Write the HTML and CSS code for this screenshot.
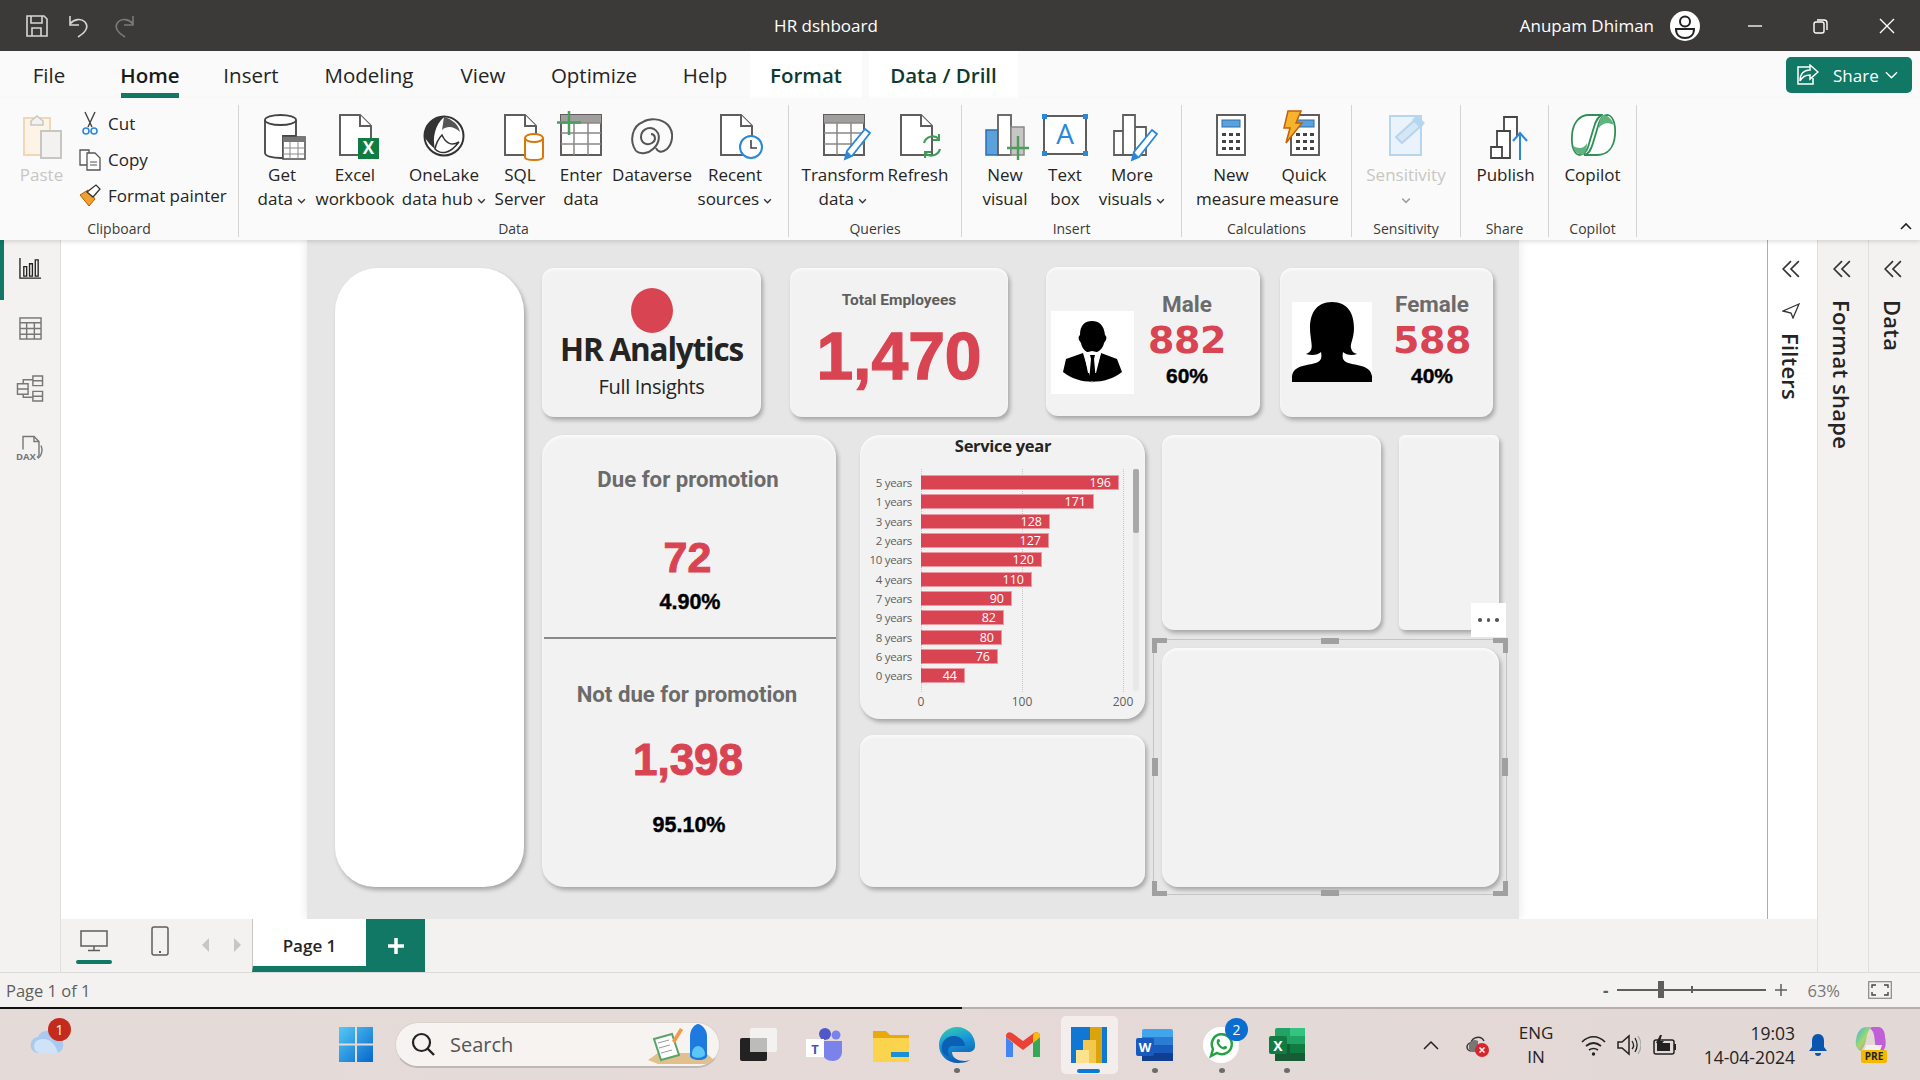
FILE: index.html
```html
<!DOCTYPE html>
<html lang="en">
<head>
<meta charset="utf-8">
<title>HR dshboard</title>
<link rel="stylesheet" href="styles.css">
</head>
<body>
<svg class="defs" aria-hidden="true">
  <defs>
    <g id="doc"><path d="M1 1h20l11 11v29H1z" fill="#fff" stroke="#605e5c" stroke-width="2"/><path d="M21 1v11h11" fill="#fff" stroke="#605e5c" stroke-width="2"/></g>
    <g id="pencil"><path d="M24 0l5 4-18 23-7 3 2-8z" fill="#fff" stroke="#2b88d8" stroke-width="1.8"/><path d="M4 30l2-8 5 5z" fill="#2b88d8"/></g>
    <g id="table"><rect x="1" y="1" width="40" height="40" fill="#fff" stroke="#605e5c" stroke-width="2"/><rect x="1" y="1" width="40" height="8" fill="#a19f9d"/><path d="M1 9h40M1 19h40M1 30h40M14 9v32M28 9v32" stroke="#8a8886" stroke-width="1.5"/></g>
    <g id="calc"><rect x="1" y="1" width="28" height="40" fill="#fff" stroke="#605e5c" stroke-width="2"/><rect x="6" y="6" width="18" height="7" fill="#5ba1dc" stroke="#2b6fb0"/><path d="M6 19h4v3H6zM13 19h4v3h-4zM20 19h4v3h-4zM6 26h4v3H6zM13 26h4v3h-4zM20 26h4v3h-4zM6 33h4v3H6zM13 33h4v3h-4zM20 33h4v3h-4z" fill="#444"/></g>
    <linearGradient id="gWin" x1="0" y1="0" x2="1" y2="1"><stop offset="0" stop-color="#55c9f7"/><stop offset="1" stop-color="#0667c9"/></linearGradient>
    <linearGradient id="gEdge" x1="0" y1="0" x2="0.300" y2="1"><stop offset="0" stop-color="#3ad0a8"/><stop offset=".45" stop-color="#1a9bd8"/><stop offset="1" stop-color="#0b5fb5"/></linearGradient>
    <linearGradient id="gCop" x1="0" y1="0" x2="1" y2="1"><stop offset="0" stop-color="#2fb5e8"/><stop offset=".5" stop-color="#a5d86a"/><stop offset="1" stop-color="#d45cd0"/></linearGradient>
  </defs>
</svg>

<div class="app">
  <header class="titlebar">
    <div class="tb-left">
      <svg class="tb-save" viewBox="0 0 22 22"><path d="M1 1h17l3 3v17H1z" fill="none" stroke="#d6d6d6" stroke-width="1.6"/><path d="M5 1v7h11V1M6 21v-8h9v8" fill="none" stroke="#d6d6d6" stroke-width="1.6"/></svg>
      <svg class="tb-undo" viewBox="0 0 22 24"><path d="M2 2v9h9M2 10c4-5 11-6 15-2 4 5 1 10-7 15" fill="none" stroke="#d6d6d6" stroke-width="1.6"/></svg>
      <svg class="tb-redo" viewBox="0 0 22 24"><path d="M20 2v9h-9M20 10c-4-5-11-6-15-2-4 5-1 10 7 15" fill="none" stroke="#7a7a7a" stroke-width="1.6"/></svg>
    </div>
    <div class="tb-title">HR dshboard</div>
    <div class="tb-right">
      <span class="tb-user">Anupam Dhiman</span>
      <svg class="tb-avatar" viewBox="0 0 30 30"><circle cx="15" cy="15" r="15" fill="#fff"/><circle cx="15" cy="10.5" r="5" fill="none" stroke="#222" stroke-width="2"/><path d="M6 18h18c0 6-4 9-9 9s-9-3-9-9z" fill="none" stroke="#222" stroke-width="2"/></svg>
      <svg class="tb-min" viewBox="0 0 16 16"><path d="M0 8h15" stroke="#fff" stroke-width="1.4"/></svg>
      <svg class="tb-max" viewBox="0 0 16 16"><rect x="1" y="4" width="10" height="11" rx="2" fill="none" stroke="#fff" stroke-width="1.4"/><path d="M4 2h7a3 3 0 0 1 3 3v7" fill="none" stroke="#fff" stroke-width="1.4"/></svg>
      <svg class="tb-close" viewBox="0 0 16 16"><path d="M1 1l14 14M15 1L1 15" stroke="#fff" stroke-width="1.4"/></svg>
    </div>
  </header>

  <nav class="tabs">
    <span class="tab t-file">File</span>
    <span class="tab t-home">Home</span>
    <span class="tab t-insert">Insert</span>
    <span class="tab t-model">Modeling</span>
    <span class="tab t-view">View</span>
    <span class="tab t-opt">Optimize</span>
    <span class="tab t-help">Help</span>
    <span class="tab ctx t-format">Format</span>
    <span class="tab ctx t-drill">Data / Drill</span>
    <button class="share">
      <svg class="share-ico" viewBox="0 0 24 22"><path d="M16 3H3v17h15v-6" fill="none" stroke="#fff" stroke-width="1.5"/><path d="M15 1l8 7-8 7v-4c-5 0-8 2-10 6 0-7 4-11 10-11z" fill="#117865" stroke="#fff" stroke-width="1.5"/></svg>
      <span>Share</span>
      <svg class="share-chev" viewBox="0 0 14 8"><path d="M1 1l6 6 6-6" fill="none" stroke="#fff" stroke-width="1.5"/></svg>
    </button>
  </nav>

  <section class="ribbon">
    <div class="rgroup g-clip">
      <div class="clip-body">
        <div class="item paste">
          <svg class="ico" viewBox="0 0 48 48"><rect x="6" y="5" width="26" height="37" fill="#fdf3e6" stroke="#f0d7b5" stroke-width="2"/><path d="M13 8l6-5 6 5v4H13z" fill="#f3f2f1" stroke="#c8c6c4" stroke-width="1.5"/><rect x="23" y="18" width="20" height="27" fill="#f3f2f1" stroke="#c8c6c4" stroke-width="2"/></svg>
          <span>Paste</span>
        </div>
        <div class="clip-list">
          <div class="clip-row">
            <svg class="cico" viewBox="0 0 24 24"><path d="M7 1l7 15M17 1l-7 15" stroke="#444" stroke-width="1.4" fill="none"/><circle cx="8" cy="20" r="3" fill="none" stroke="#2b88d8" stroke-width="1.6"/><circle cx="16" cy="20" r="3" fill="none" stroke="#2b88d8" stroke-width="1.6"/></svg>
            <span>Cut</span>
          </div>
          <div class="clip-row">
            <svg class="cico" viewBox="0 0 24 24"><path d="M2 3h9l0 15H2z" fill="#fff" stroke="#555" stroke-width="1.3"/><path d="M9 6h8l5 5v12H9z" fill="#fff" stroke="#555" stroke-width="1.3"/><path d="M12 15h7M12 18h7" stroke="#555"/></svg>
            <span>Copy</span>
          </div>
          <div class="clip-row">
            <svg class="cico" viewBox="0 0 24 24"><path d="M2 12l8-5 7 9-6 7z" fill="#f0a030" stroke="#b85c00"/><path d="M9 9l9-7 4 4-7 8z" fill="#fff" stroke="#333" stroke-width="1.3"/></svg>
            <span>Format painter</span>
          </div>
        </div>
      </div>
      <div class="glabel">Clipboard</div>
    </div>

    <div class="rgroup g-data">
      <div class="gitems">
        <div class="item">
          <svg class="ico" viewBox="0 0 48 48"><path d="M7 7v33c0 3 7 5 16 5h2V23h13V7" fill="#fff" stroke="#444" stroke-width="1.8"/><ellipse cx="22.500" cy="7" rx="15.500" ry="5" fill="#fff" stroke="#444" stroke-width="1.800"/><rect x="25" y="24" width="22" height="22" fill="#fff" stroke="#555" stroke-width="1.600"/><rect x="25" y="24" width="22" height="5" fill="#777"/><path d="M25 35h22M25 41h22M32 29v17M40 29v17" stroke="#888"/></svg>
          <span>Get</span><span>data <svg class="chev" viewBox="0 0 8 5"><path d="M1 1l3 3 3-3" fill="none" stroke="#333" stroke-width="1.200"/></svg></span>
        </div>
        <div class="item">
          <svg class="ico" viewBox="0 0 48 48"><use href="#doc" x="8" y="1"/><rect x="27" y="25" width="21" height="21" fill="#107c41"/><text x="37.500" y="41" class="xl-x">X</text></svg>
          <span>Excel</span><span>workbook</span>
        </div>
        <div class="item">
          <svg class="ico" viewBox="0 0 48 48"><circle cx="24" cy="23" r="19.500" fill="#fff" stroke="#333" stroke-width="2"/><path d="M24 4c-12 0-20 10-19 21 3 4 6 8 10 11-3-11 0-24 9-32z" fill="#333"/><path d="M15 36c6 6 15 5 24-7-7 4-13 2-17-7-4 4-6 9-7 14z" fill="#fff" stroke="#333" stroke-width="1.500"/><path d="M24 4c4 1 14 5 16 15-6-5-12-7-18-2" fill="#555"/></svg>
          <span>OneLake</span><span>data hub <svg class="chev" viewBox="0 0 8 5"><path d="M1 1l3 3 3-3" fill="none" stroke="#333" stroke-width="1.200"/></svg></span>
        </div>
        <div class="item">
          <svg class="ico" viewBox="0 0 48 48"><use href="#doc" x="8" y="1"/><path d="M29 25v19c0 2 4 3 9 3s9-1 9-3V25" fill="#fff" stroke="#d97706" stroke-width="2"/><ellipse cx="38" cy="25" rx="9" ry="4" fill="#fff" stroke="#d97706" stroke-width="2"/></svg>
          <span>SQL</span><span>Server</span>
        </div>
        <div class="item">
          <svg class="ico" viewBox="0 0 48 48"><use href="#table" x="3" y="1"/><path d="M12 -2v24M0 9.500h24" stroke="#4a9e5c" stroke-width="2.500"/></svg>
          <span>Enter</span><span>data</span>
        </div>
        <div class="item">
          <svg class="ico" viewBox="0 0 48 48"><path d="M8 38C1 28 4 13 15 9c6-4 18-4 25 3 7 8 4 19-1 24-6 5-10 2-11-1" fill="none" stroke="#555" stroke-width="2"/><path d="M8 38c5 4 13 2 17-2 6-5 9-15 1-20-7-3-13 2-13 8s6 9 11 6 3-9-1-9" fill="none" stroke="#555" stroke-width="2"/></svg>
          <span>Dataverse</span>
        </div>
        <div class="item">
          <svg class="ico" viewBox="0 0 48 48"><use href="#doc" x="9" y="1"/><circle cx="40" cy="34" r="11" fill="#fff" stroke="#2b88d8" stroke-width="2"/><path d="M40 27v8h6" fill="none" stroke="#444" stroke-width="1.600"/></svg>
          <span>Recent</span><span>sources <svg class="chev" viewBox="0 0 8 5"><path d="M1 1l3 3 3-3" fill="none" stroke="#333" stroke-width="1.200"/></svg></span>
        </div>
      </div>
      <div class="glabel">Data</div>
    </div>

    <div class="rgroup g-query">
      <div class="gitems">
        <div class="item">
          <svg class="ico" viewBox="0 0 48 48"><use href="#table" x="4" y="1"/><use href="#pencil" x="22" y="16"/></svg>
          <span>Transform</span><span>data <svg class="chev" viewBox="0 0 8 5"><path d="M1 1l3 3 3-3" fill="none" stroke="#333" stroke-width="1.200"/></svg></span>
        </div>
        <div class="item">
          <svg class="ico" viewBox="0 0 48 48"><use href="#doc" x="6" y="1"/><path d="M30 30a9 9 0 0 1 15-4M46 36a9 9 0 0 1-15 4" fill="none" stroke="#3f9b58" stroke-width="2.200"/><path d="M45 21v6h-6M31 45v-6h6" fill="none" stroke="#3f9b58" stroke-width="2"/></svg>
          <span>Refresh</span>
        </div>
      </div>
      <div class="glabel">Queries</div>
    </div>

    <div class="rgroup g-insert">
      <div class="gitems">
        <div class="item">
          <svg class="ico" viewBox="0 0 48 48"><rect x="5" y="17" width="12" height="25" fill="#5ba1dc" stroke="#2b6fb0" stroke-width="1.500"/><rect x="17" y="2" width="13" height="40" fill="#fff" stroke="#605e5c" stroke-width="1.800"/><rect x="30" y="14" width="13" height="28" fill="#c8c6c4" stroke="#8a8886" stroke-width="1.500"/><path d="M37 23v24M26 35h22" stroke="#4a9e5c" stroke-width="2.400"/></svg>
          <span>New</span><span>visual</span>
        </div>
        <div class="item">
          <svg class="ico" viewBox="0 0 48 48"><rect x="3" y="3" width="42" height="38" fill="#fff" stroke="#605e5c" stroke-width="2"/><path d="M1 1h5v5H1zM42 1h5v5h-5zM1 38h5v5H1zM42 38h5v5h-5z" fill="#2b88d8"/><text x="24" y="31" class="tb-a">A</text></svg>
          <span>Text</span><span>box</span>
        </div>
        <div class="item">
          <svg class="ico" viewBox="0 0 48 48"><path d="M6 18h9v24H6zM15 2h12v40H15zM27 14h11v28H27z" fill="#fff" stroke="#605e5c" stroke-width="1.800"/><use href="#pencil" x="20" y="17"/></svg>
          <span>More</span><span>visuals <svg class="chev" viewBox="0 0 8 5"><path d="M1 1l3 3 3-3" fill="none" stroke="#333" stroke-width="1.200"/></svg></span>
        </div>
      </div>
      <div class="glabel">Insert</div>
    </div>

    <div class="rgroup g-calc">
      <div class="gitems">
        <div class="item">
          <svg class="ico" viewBox="0 0 48 48"><use href="#calc" x="9" y="1"/></svg>
          <span>New</span><span>measure</span>
        </div>
        <div class="item">
          <svg class="ico" viewBox="0 0 48 48"><use href="#calc" x="10" y="1"/><path d="M8 -2h13l-5 12h6L6 30l4-15H4z" fill="#f7b32b" stroke="#c4600a" stroke-width="1.500"/></svg>
          <span>Quick</span><span>measure</span>
        </div>
      </div>
      <div class="glabel">Calculations</div>
    </div>

    <div class="rgroup g-sens">
      <div class="gitems">
        <div class="item faded">
          <svg class="ico" viewBox="0 0 48 48"><path d="M8 3h31v39H8z" fill="#eaf3fb" stroke="#b6d5ee" stroke-width="2"/><path d="M14 24L34 6l6 6-20 18z" fill="#d5e6f5" stroke="#b6d5ee" stroke-width="2"/><path d="M30 7l5-5 8 8-5 5z" fill="#b6d5ee"/></svg>
          <span>Sensitivity</span><span><svg class="chev fchev" viewBox="0 0 8 5"><path d="M1 1l3 3 3-3" fill="none" stroke="#a19f9d" stroke-width="1.200"/></svg></span>
        </div>
      </div>
      <div class="glabel">Sensitivity</div>
    </div>

    <div class="rgroup g-share">
      <div class="gitems">
        <div class="item">
          <svg class="ico" viewBox="0 0 48 48"><path d="M9 34h11v11H9zM15 18h13v27H20V34h-5zM22 18V4h13v20" fill="#fff" stroke="#444" stroke-width="1.800"/><path d="M38 47V21M31 28l7-8 7 8" fill="none" stroke="#2b88d8" stroke-width="2"/></svg>
          <span>Publish</span>
        </div>
      </div>
      <div class="glabel">Share</div>
    </div>

    <div class="rgroup g-copilot">
      <div class="gitems">
        <div class="item">
          <svg class="ico" viewBox="0 0 48 48"><path d="M20 2h14c-5 1-7 5-9 12l-6 20c-2 6-5 8-9 8-4-1-8-7-7-20C4 10 10 2 20 2z" fill="#fff" stroke="#2f8f58" stroke-width="1.800"/><path d="M28 42H15c5-1 7-5 9-12l6-20c2-6 5-8 9-8 4 1 8 7 7 20-1 12-7 20-18 20z" fill="#fff" stroke="#2f8f58" stroke-width="1.800"/><path d="M33 2c6 0 10 4 12 10-6-3-12-2-15 3 0-5 1-10 3-13zM14 42c-6-1-9-4-10-9 6 3 11 3 14-3 0 5-1 9-4 12z" fill="#5fb37f"/></svg>
          <span>Copilot</span>
        </div>
      </div>
      <div class="glabel">Copilot</div>
    </div>
    <svg class="collapse" viewBox="0 0 12 8"><path d="M1 7l5-5 5 5" fill="none" stroke="#222" stroke-width="1.600"/></svg>
  </section>

  <div class="workspace">
    <aside class="rail">
      <div class="rail-btn active">
        <svg class="rico" viewBox="0 0 24 24"><path d="M1 1v21h22" fill="none" stroke="#222" stroke-width="1.400"/><path d="M5 10h3v10H5zM11 7h3v13h-3zM17 3h3v17h-3z" fill="none" stroke="#222" stroke-width="1.400"/></svg>
      </div>
      <div class="rail-btn">
        <svg class="rico" viewBox="0 0 24 24"><rect x="1" y="1" width="22" height="22" fill="none" stroke="#777" stroke-width="1.500"/><path d="M1 6h22M1 12h22M1 18h22M8 6v17M16 6v17" stroke="#777" stroke-width="1.500"/></svg>
      </div>
      <div class="rail-btn">
        <svg class="rico big" viewBox="0 0 28 28"><path d="M1 9h11v11H1zM1 14.500h11M17 1h10v10H17zM17 6h10M17 17h10v10H17zM17 22h10M7 9V5h10M7 20v3h10" fill="none" stroke="#777" stroke-width="1.500"/></svg>
      </div>
      <div class="rail-btn">
        <svg class="rico big" viewBox="0 0 28 26"><path d="M7 14V1h11l5 5v14l-2 2" fill="none" stroke="#777" stroke-width="1.400"/><path d="M18 1v5h5M25 10c2 4 1 10-3 13" fill="none" stroke="#777" stroke-width="1.400"/><text x="0" y="24" class="dax">DAX</text></svg>
      </div>
    </aside>

    <div class="center">
      <div class="stage">
        <main class="canvas-wrap">
          <div class="page">
            <div class="card nav-card"></div>
            <div class="page-main">
              <div class="top-row">
                <div class="card kpi hr-card">
                  <div class="logo-dot"></div>
                  <div class="hr-title">HR Analytics</div>
                  <div class="hr-sub">Full Insights</div>
                </div>
                <div class="card kpi total-card">
                  <div class="total-title">Total Employees</div>
                  <div class="total-val">1,470</div>
                </div>
                <div class="card kpi person male">
                  <div class="pic pic-m">
                    <svg viewBox="0 0 83 83"><path d="M29 24c0-10 5-14 12-14s12 4 13 14c1 1 2 2 1 5l-2 3c-1 6-6 10-12 10s-10-4-11-10l-2-3c-1-3 0-4 1-5z"/><path d="M12 61l3-13 17-6 9 30 9-30 16 6 5 13c-16 13-43 13-59 0z"/><path d="M33 42l8-2 9 2-5 20h-8z" fill="#fff"/><path d="M39 44h5l-1 4 2 22h-7l2-22z"/></svg>
                  </div>
                  <div class="person-text">
                    <div class="p-label">Male</div>
                    <div class="p-val">882</div>
                    <div class="p-pct">60%</div>
                  </div>
                </div>
                <div class="card kpi person female">
                  <div class="pic pic-f">
                    <svg viewBox="0 0 80 80"><path d="M40 0C24 0 18 12 18 26c0 10 3 18 1 22-1 2-3 3-5 4 6 2 12 1 15-2 1 6 0 8-3 10-8 4-24 2-26 14v6h80v-6c-2-12-18-10-26-14-3-2-4-4-3-10 3 3 9 4 14 2-3-1-5-2-6-6-1-4 3-10 3-20C62 12 56 0 40 0z"/></svg>
                  </div>
                  <div class="person-text">
                    <div class="p-label">Female</div>
                    <div class="p-val">588</div>
                    <div class="p-pct">40%</div>
                  </div>
                </div>
              </div>

              <div class="bottom-row">
                <div class="card promo">
                  <div class="promo-top">
                    <div class="promo-title">Due for promotion</div>
                    <div class="promo-val v72">72</div>
                    <div class="promo-pct p1">4.90%</div>
                  </div>
                  <div class="promo-bottom">
                    <div class="promo-title">Not due for promotion</div>
                    <div class="promo-val v1398">1,398</div>
                    <div class="promo-pct p2">95.10%</div>
                  </div>
                </div>

                <div class="col-mid">
                  <div class="card service">
                    <div class="svc-title">Service year</div>
                    <div class="svc-body">
                      <div class="svc-chart">
                        <div class="svc-rows">
                          <i class="grid g0"></i><i class="grid g1"></i><i class="grid g2"></i>
                          <div class="svc-row"><span class="svc-lab">5 years</span><span class="bar" style="width:198px">196</span></div>
                          <div class="svc-row"><span class="svc-lab">1 years</span><span class="bar" style="width:173px">171</span></div>
                          <div class="svc-row"><span class="svc-lab">3 years</span><span class="bar" style="width:129px">128</span></div>
                          <div class="svc-row"><span class="svc-lab">2 years</span><span class="bar" style="width:128px">127</span></div>
                          <div class="svc-row"><span class="svc-lab">10 years</span><span class="bar" style="width:121px">120</span></div>
                          <div class="svc-row"><span class="svc-lab">4 years</span><span class="bar" style="width:111px">110</span></div>
                          <div class="svc-row"><span class="svc-lab">7 years</span><span class="bar" style="width:91px">90</span></div>
                          <div class="svc-row"><span class="svc-lab">9 years</span><span class="bar" style="width:83px">82</span></div>
                          <div class="svc-row"><span class="svc-lab">8 years</span><span class="bar" style="width:81px">80</span></div>
                          <div class="svc-row"><span class="svc-lab">6 years</span><span class="bar" style="width:77px">76</span></div>
                          <div class="svc-row"><span class="svc-lab">0 years</span><span class="bar" style="width:44px">44</span></div>
                        </div>
                        <div class="svc-axis"><span>0</span><span>100</span><span>200</span></div>
                      </div>
                      <div class="svc-scroll"><div class="svc-thumb"></div></div>
                    </div>
                  </div>
                  <div class="card empty-mid"></div>
                </div>

                <div class="col-right">
                  <div class="col-right-top">
                    <div class="card empty-a"></div>
                    <div class="card empty-b"></div>
                  </div>
                  <div class="card selected"></div>
                </div>
              </div>
            </div>

            <div class="more-btn"><i></i><i></i><i></i></div>
            <div class="sel-frame">
              <i class="h c-tl"></i><i class="h c-tr"></i><i class="h c-bl"></i><i class="h c-br"></i>
              <i class="h m-t"></i><i class="h m-b"></i><i class="h m-l"></i><i class="h m-r"></i>
            </div>
          </div>
        </main>
        <aside class="pane filters">
          <svg class="dbl" viewBox="0 0 16 16"><path d="M8 1L1 8l7 7M15 1L8 8l7 7" fill="none" stroke="#333" stroke-width="1.500"/></svg>
          <svg class="funnel" viewBox="0 0 18 16"><path d="M17 1L1 8l8 2 2 5z" fill="none" stroke="#333" stroke-width="1.300"/></svg>
          <span class="vtext">Filters</span>
        </aside>
      </div>

      <div class="pagebar">
        <div class="view-btn desk">
          <svg class="desk-ico" viewBox="0 0 28 22"><rect x="1" y="1" width="26" height="15" fill="none" stroke="#605e5c" stroke-width="1.500"/><path d="M14 16v4M8 20.500h12" stroke="#605e5c" stroke-width="1.500"/></svg>
          <i class="desk-line"></i>
        </div>
        <svg class="phone-ico" viewBox="0 0 18 30"><rect x="1" y="1" width="16" height="28" rx="2" fill="none" stroke="#605e5c" stroke-width="1.500"/><path d="M8 25h2v2H8z" fill="#605e5c"/></svg>
        <svg class="arrow a-l" viewBox="0 0 7 14"><path d="M7 0L0 7l7 7z" fill="#c8c6c4"/></svg>
        <svg class="arrow a-r" viewBox="0 0 7 14"><path d="M0 0l7 7-7 7z" fill="#c8c6c4"/></svg>
        <div class="page-tab">Page 1</div>
        <div class="add-tab">
          <svg viewBox="0 0 16 16"><path d="M8 0v16M0 8h16" stroke="#fff" stroke-width="3.500"/></svg>
        </div>
      </div>
    </div>

    <aside class="pane format-pane">
      <svg class="dbl" viewBox="0 0 16 16"><path d="M8 1L1 8l7 7M15 1L8 8l7 7" fill="none" stroke="#333" stroke-width="1.500"/></svg>
      <span class="vtext">Format shape</span>
    </aside>
    <aside class="pane data-pane">
      <svg class="dbl" viewBox="0 0 16 16"><path d="M8 1L1 8l7 7M15 1L8 8l7 7" fill="none" stroke="#333" stroke-width="1.500"/></svg>
      <span class="vtext">Data</span>
    </aside>
  </div>

  <footer class="status">
    <span class="status-page">Page 1 of 1</span>
    <div class="zoom">
      <span class="z-minus">-</span>
      <div class="z-track"><i class="z-thumb"></i><i class="z-tick"></i></div>
      <svg class="z-plus" viewBox="0 0 12 12"><path d="M6 0v12M0 6h12" stroke="#605e5c" stroke-width="1.500"/></svg>
      <span class="z-val">63%</span>
      <svg class="z-fit" viewBox="0 0 24 18"><rect x=".7" y=".7" width="22.600" height="16.600" fill="none" stroke="#8a8886" stroke-width="1.200"/><path d="M4 7V4h4M16 4h4v3M20 11v3h-4M8 14H4v-3" fill="none" stroke="#444" stroke-width="1.400"/></svg>
    </div>
  </footer>
  <div class="divider"></div>

  <div class="taskbar">
    <div class="tk-weather">
      <svg viewBox="0 0 36 24"><path d="M9 23a8 8 0 0 1-1-16 10 10 0 0 1 18-1 9 9 0 0 1 2 17z" fill="#a9caee"/><path d="M9 23a7 7 0 0 1-1-13c8-3 16 0 20 13z" fill="#cfe2f7"/></svg>
      <b class="tk-badge red">1</b>
    </div>
    <svg class="tk-start" viewBox="0 0 34 35"><path d="M0 0h16v16.500H0zM18 0h16v16.500H18zM0 18.500h16V35H0zM18 18.500h16V35H18z" fill="url(#gWin)"/></svg>
    <div class="tk-search">
      <svg class="s-ico" viewBox="0 0 24 24"><circle cx="10.500" cy="10.500" r="8.500" fill="none" stroke="#222" stroke-width="2.200"/><path d="M16 16l7 7" stroke="#222" stroke-width="2.400"/></svg>
      <span>Search</span>
      <svg class="s-art" viewBox="0 0 66 40"><path d="M0 36l10-7h48l8 7-8 4H10z" fill="#e2c08d"/><path d="M6 15l18-5 7 21-18 5z" fill="#fff" stroke="#5aa469" stroke-width="2"/><path d="M10 19l11-3M11 24l11-3M13 29l11-3" stroke="#999"/><path d="M24 17l8-13 3 2-8 13z" fill="#f2994a"/><path d="M42 32V12C42 5 47 0 50 0s9 5 9 12v20c0 2-3 4-8 4s-9-2-9-4z" fill="#1f7ae0"/><path d="M44 30c0-5 3-8 6-8s7 3 7 8-14 5-13 0z" fill="#5cc6f5"/></svg>
    </div>
    <svg class="tk-taskview" viewBox="0 0 37 33"><rect x="10" y="0" width="27" height="24" rx="2" fill="#f4f2f1"/><rect x="0" y="10" width="27" height="23" rx="2" fill="#222"/><rect x="10" y="10" width="17" height="14" fill="#bdbbb9"/></svg>
    <svg class="tk-teams" viewBox="0 0 38 33"><circle cx="30" cy="7" r="4.500" fill="#7b83eb"/><circle cx="19" cy="6" r="6" fill="#5059c9"/><path d="M8 13h28v11c0 5-4 9-9 9-6 0-10-3-11-9z" fill="#7b83eb"/><rect x="0" y="11" width="18" height="18" fill="#fff"/><text x="9" y="26" class="teams-t">T</text></svg>
    <svg class="tk-folder" viewBox="0 0 36 34"><path d="M0 3h13l4 4h19v25H0z" fill="#e8a90c"/><path d="M0 10h36v24H0z" fill="#fcd34d"/><rect x="18" y="24" width="18" height="5" fill="#1a8fd8"/></svg>
    <div class="tk-app edge">
      <svg viewBox="0 0 36 36"><path d="M18 0a18 18 0 0 1 18 19c0 4-3 6-7 6H13c0 6 6 9 13 9 2 0 5-1 6-2-3 3-8 4-13 4C8 36 0 28 0 18S8 0 18 0z" fill="url(#gEdge)"/><path d="M3 24c-2-9 5-16 13-15 6 1 10 5 10 10h-13c-3 0-6 5-2 11-4-1-7-3-8-6z" fill="#0b5fb5"/></svg>
      <i class="dot"></i>
    </div>
    <svg class="tk-gmail" viewBox="0 0 34 25"><path d="M0 5v20h7V11z" fill="#4285f4"/><path d="M27 11v14h7V5z" fill="#34a853"/><path d="M0 5l17 13L34 5v-1c0-3-3-5-6-3L17 9 6 1C3-1 0 1 0 4z" fill="#ea4335"/><path d="M27 4v7l7-6V4c0-3-3-5-6-3z" fill="#fbbc04"/></svg>
    <div class="tk-pbi">
      <svg viewBox="0 0 36 36"><rect width="36" height="36" fill="#1078d4"/><rect x="19" y="0" width="12" height="36" fill="#d9a40c"/><rect x="12" y="13" width="13" height="23" fill="#f2c94c"/><rect x="5" y="23" width="13" height="13" fill="#fbe38e"/></svg>
      <i class="pbi-line"></i>
    </div>
    <div class="tk-app word">
      <svg viewBox="0 0 37 32"><rect x="6" y="0" width="31" height="32" rx="2" fill="#41a5ee"/><rect x="6" y="8" width="31" height="8" fill="#2b7cd3"/><rect x="6" y="16" width="31" height="8" fill="#185abd"/><rect x="6" y="24" width="31" height="8" fill="#103f91"/><rect x="0" y="9" width="18" height="18" rx="2" fill="#185abd"/><text x="9" y="23" class="word-t">W</text></svg>
      <i class="dot"></i>
    </div>
    <div class="tk-app whats">
      <svg viewBox="0 0 37 36"><circle cx="18" cy="18" r="18" fill="#fff"/><path d="M8 29l2-7a10 10 0 1 1 4 4z" fill="#fff" stroke="#25a244" stroke-width="2.500"/><path d="M14 13c1-2 3-1 3 1l-1 2c1 2 2 3 4 4l2-1c2 0 3 2 1 3-4 2-11-4-9-9z" fill="#25a244"/></svg>
      <b class="tk-badge blue">2</b>
      <i class="dot"></i>
    </div>
    <div class="tk-app excel">
      <svg viewBox="0 0 36 33"><rect x="6" y="0" width="30" height="33" rx="2" fill="#21a366"/><rect x="21" y="0" width="15" height="8" fill="#33c481"/><rect x="21" y="16" width="15" height="9" fill="#107c41"/><rect x="6" y="16" width="15" height="17" fill="#185c37"/><rect x="21" y="25" width="15" height="8" fill="#185c37"/><rect x="0" y="8" width="18" height="18" rx="2" fill="#107c41"/><text x="9" y="23" class="excel-t">X</text></svg>
      <i class="dot"></i>
    </div>

    <svg class="tr-chev" viewBox="0 0 16 10"><path d="M1 9l7-7 7 7" fill="none" stroke="#222" stroke-width="1.500"/></svg>
    <svg class="tr-cloud" viewBox="0 0 24 24"><path d="M5 18a4 4 0 0 1 0-8 7 7 0 0 1 13-2" fill="none" stroke="#333" stroke-width="1.500"/><path d="M3 14a6 6 0 0 1 9-6v11H6a4 4 0 0 1-3-5z" fill="#777"/><circle cx="16" cy="17" r="7" fill="#d9252c"/><path d="M13.500 14.500l5 5M18.500 14.500l-5 5" stroke="#fff" stroke-width="1.500"/></svg>
    <div class="tr-lang"><span>ENG</span><span>IN</span></div>
    <svg class="tr-wifi" viewBox="0 0 25 22"><path d="M1 8c7-7 16-7 23 0M5 12c5-4 10-4 15 0M8 16c3-2 6-2 9 0" fill="none" stroke="#222" stroke-width="1.700"/><circle cx="12.500" cy="20" r="1.700" fill="#222"/></svg>
    <svg class="tr-vol" viewBox="0 0 24 22"><path d="M1 8h4l7-6v18l-7-6H1z" fill="none" stroke="#222" stroke-width="1.500"/><path d="M15 7c2 3 2 6 0 8M18 4c3 5 3 9 0 14" fill="none" stroke="#222" stroke-width="1.300"/><path d="M21 2c4 6 4 12 0 18" fill="none" stroke="#aaa" stroke-width="1.300"/></svg>
    <svg class="tr-batt" viewBox="0 0 24 20"><rect x="1" y="5" width="20" height="14" rx="2" fill="none" stroke="#222" stroke-width="1.500"/><rect x="4" y="8" width="13" height="8" fill="#222"/><path d="M22 9v6" stroke="#222" stroke-width="2"/><path d="M7 0L3 8h4l-2 5 6-7H7l2-6z" fill="#222"/></svg>
    <div class="tr-clock"><span>19:03</span><span>14-04-2024</span></div>
    <svg class="tr-bell" viewBox="0 0 20 24"><path d="M10 1c4 0 6 3 6 7v6l3 4H1l3-4V8c0-4 2-7 6-7z" fill="#0a55b0"/><path d="M7 20a3 3 0 0 0 6 0z" fill="#0a55b0"/></svg>
    <div class="tr-cop">
      <svg viewBox="0 0 34 28"><path d="M12 0h12c4 1 6 5 6 10 2 8 0 16-8 17-2-7-2-14-3-19C18 3 15 1 12 0z" fill="#c060d8"/><path d="M12 0c-7 0-10 6-11 13-1 5 1 10 5 11 4-5 5-10 6-16 1-3 2-6 5-8z" fill="url(#gCop)"/><path d="M11 18h16l-3 9H8z" fill="#f4f0ee"/></svg>
      <b class="pre">PRE</b>
    </div>
  </div>
</div>
</body>
</html>
```

FILE: styles.css
```css
* { box-sizing: border-box; }
html, body { margin: 0; padding: 0; height: 100%; overflow: hidden; }
body { font-family: "Open Sans", "Noto Sans", sans-serif; color: #252423; background: #f3f2f1; }
.defs { width: 0; height: 0; display: block; position: absolute; }
.app { width: 1920px; height: 1080px; display: flex; flex-direction: column; }

/* title bar */
.titlebar { height: 51px; flex: none; background: #3b3a39; color: #fff; display: flex; align-items: center; }
.tb-left { display: flex; align-items: center; padding-left: 26px; width: 135px; flex: none; }
.tb-save { width: 22px; height: 22px; flex: none; }
.tb-undo { width: 22px; height: 24px; margin-left: 20px; flex: none; }
.tb-redo { width: 22px; height: 24px; margin-left: 23px; flex: none; }
.tb-title { width: 1382px; flex: none; text-align: center; font-size: 17px; }
.tb-right { display: flex; align-items: center; margin-left: auto; padding-right: 25px; }
.tb-user { font-size: 17px; white-space: nowrap; }
.tb-avatar { width: 30px; height: 30px; margin-left: 16px; }
.tb-min { width: 15px; height: 16px; margin-left: 48px; }
.tb-max { width: 16px; height: 16px; margin-left: 50px; }
.tb-close { width: 16px; height: 16px; margin-left: 50px; }

/* tabs */
.tabs { height: 47px; flex: none; background: #fafafa; display: flex; align-items: stretch; font-size: 20.500px; position: relative; }
.tab { display: flex; align-items: center; justify-content: center; height: 47px; color: #252423; white-space: nowrap; }
.t-file { width: 50px; margin-left: 24px; }
.t-home { width: 58px; margin-left: 47px; font-weight: 600; border-bottom: 5px solid #117865; padding-top: 5px; color: #1b1a19; }
.t-insert { width: 60px; margin-left: 42px; }
.t-model { width: 96px; margin-left: 40px; }
.t-view { width: 50px; margin-left: 41px; }
.t-opt { width: 90px; margin-left: 41px; }
.t-help { width: 50px; margin-left: 41px; }
.ctx { background: #fff; color: #0b3b32; font-weight: 600; }
.t-format { width: 112px; margin-left: 20px; }
.t-drill { width: 149px; margin-left: 7px; }
.share { margin: 6px 8px 0 auto; width: 126px; height: 36px; background: #117865; border: 0; border-radius: 5px; color: #fff; display: flex; align-items: center; padding: 0 0 0 9px; font: 17px "Open Sans", sans-serif; }
.share-ico { width: 24px; height: 22px; margin-right: 14px; }
.share-chev { width: 13px; height: 8px; margin-left: 6px; }

/* ribbon */
.ribbon { height: 142px; flex: none; background: #fafafa; display: flex; align-items: flex-start; padding-top: 7px; position: relative; box-shadow: 0 2px 4px rgba(0,0,0,.12); z-index: 2; font-size: 17px; }
.rgroup { height: 132px; display: flex; flex-direction: column; border-right: 1px solid #d6d4d2; }
.gitems { flex: 1; display: grid; padding-top: 8px; }
.glabel { height: 17px; line-height: 17px; text-align: center; font-size: 14px; color: #3b3a39; }
.item { display: flex; flex-direction: column; align-items: center; white-space: nowrap; }
.item > span { line-height: 24px; height: 24px; display: block; }
.ico { width: 48px; height: 48px; overflow: visible; margin-bottom: 2px; flex: none; }
.chev { width: 9px; height: 6px; vertical-align: 1px; }
.g-clip { width: 239px; }
.clip-body { flex: 1; display: flex; padding-left: 5px; }
.paste { width: 73px; padding-top: 8px; color: #c8c6c4; }
.clip-row { height: 36px; display: flex; align-items: center; gap: 6px; white-space: nowrap; }
.cico { width: 24px; height: 24px; flex: none; }
.g-data { width: 550px; }
.g-data .gitems { grid-template-columns: 74px 72px 106px 46px 76px 66px 100px; padding-left: 6px; }
.g-query { width: 173px; }
.g-query .gitems { grid-template-columns: 86px 64px; padding-left: 11px; }
.g-insert { width: 220px; }
.g-insert .gitems { grid-template-columns: 70px 50px 84px; padding-left: 8px; }
.g-calc { width: 170px; }
.g-calc .gitems { grid-template-columns: 80px 66px; padding-left: 9px; }
.g-sens { width: 109px; }
.g-share, .g-copilot { width: 88px; }
.g-sens .gitems, .g-copilot .gitems { grid-template-columns: 1fr; }
.g-share .gitems { grid-template-columns: 1fr; padding-left: 2px; }
.faded { color: #c8c6c4; }
.fchev { width: 10px; height: 7px; }
.collapse { position: absolute; right: 8px; top: 124px; width: 12px; height: 8px; }
.xl-x { font: 700 17px "Open Sans", sans-serif; fill: #fff; text-anchor: middle; }
.tb-a { font: 400 28px "Open Sans", sans-serif; fill: #2b88d8; text-anchor: middle; }
.dax { font: 700 9.500px "Open Sans", sans-serif; fill: #777; }

/* workspace */
.workspace { height: 732px; flex: none; display: flex; }
.rail { width: 61px; flex: none; background: #f3f2f1; border-right: 1px solid #e1dfdd; display: flex; flex-direction: column; }
.rail-btn { height: 60px; display: flex; align-items: center; justify-content: center; padding-bottom: 4px; }
.rail-btn.active { border-left: 4px solid #117865; padding-right: 4px; }
.rico { width: 23px; height: 23px; }
.rico.big { width: 28px; height: 27px; }
.center { width: 1756px; flex: none; display: flex; flex-direction: column; }
.stage { height: 679px; flex: none; display: flex; }
.canvas-wrap { width: 1706px; flex: none; background: #fff; padding-left: 246px; overflow: hidden; }
.page { width: 1212px; height: 679px; background: #e6e6e6; box-shadow: 0 0 10px rgba(0,0,0,.1); display: flex; align-items: flex-start; padding: 28px 0 0 28px; gap: 18px; position: relative; }

/* report cards */
.card { background: #f2f2f2; border-radius: 12px; box-shadow: 2px 3px 4px rgba(0,0,0,.28), inset 0 2px 3px rgba(255,255,255,.7); flex: none; }
.nav-card { width: 189px; height: 619px; background: #fff; border-radius: 44px 44px 40px 40px; }
.page-main { display: flex; flex-direction: column; gap: 18px; }
.top-row { display: flex; align-items: flex-start; }
.kpi { height: 149px; }
.hr-card { width: 219px; display: flex; flex-direction: column; align-items: center; padding-top: 20px; }
.logo-dot { width: 42px; height: 45px; border-radius: 50%; background: #d94452; }
.hr-title { font: 700 31.500px/36px "Open Sans", sans-serif; letter-spacing: -1.200px; color: #252423; margin-top: -2px; white-space: nowrap; }
.hr-sub { font-size: 20px; line-height: 28px; margin-top: 6px; color: #252423; letter-spacing: -.3px; }
.total-card { width: 218px; margin-left: 29px; display: flex; flex-direction: column; align-items: center; padding-top: 22px; }
.total-title { font: 700 15.500px/20px Roboto, sans-serif; color: #605e5c; }
.total-val { font: 700 66px/72px "Liberation Sans", sans-serif; color: #d94452; -webkit-text-stroke: 1.300px #d94452; margin-top: 10px; }
.person { display: flex; align-items: flex-start; }
.male { width: 214px; margin-left: 38px; margin-top: -1px; padding: 0 0 0 5px; }
.female { width: 213px; margin-left: 20px; padding: 0 0 0 12px; }
.pic { flex: none; background: #fff; }
.pic svg { display: block; width: 100%; height: 100%; }
.pic-m { width: 83px; height: 83px; margin-top: 44px; }
.pic-f { width: 80px; height: 80px; margin-top: 34px; }
.person-text { display: flex; flex-direction: column; align-items: center; }
.male .person-text { width: 100px; margin: 25px 0 0 3px; }
.female .person-text { width: 90px; margin: 24px 0 0 15px; }
.p-label { font: 700 22.500px/24px Roboto, sans-serif; color: #6b6b6b; }
.p-val { font: 700 38px/42px "DejaVu Sans", sans-serif; color: #d94452; margin-top: 3px; letter-spacing: -.5px; }
.p-pct { font: 700 21px/24px "Liberation Sans", sans-serif; color: #000; -webkit-text-stroke: .4px #000; margin-top: 3px; }
.bottom-row { display: flex; align-items: flex-start; }
.promo { width: 294px; height: 452px; border-radius: 22px; }
.promo-top { height: 204px; padding-top: 32px; margin-left: 2px; border-bottom: 2px solid #8a8a8a; }
.promo-bottom { padding-top: 43px; }
.promo-title { font: 700 22.200px/24px Roboto, sans-serif; color: #6b6b6b; text-align: center; padding-right: 4px; }
.promo-val { font-family: "Liberation Sans", sans-serif; font-weight: 700; color: #d94452; text-align: center; -webkit-text-stroke: 1px #d94452; }
.v72 { font-size: 43px; line-height: 44px; margin-top: 44px; padding-right: 5px; }
.v1398 { font-size: 44px; line-height: 50px; margin-top: 29px; padding-right: 2px; }
.promo-pct { font: 700 21.500px/24px "Liberation Sans", sans-serif; color: #000; text-align: center; -webkit-text-stroke: .4px #000; }
.p1 { margin-top: 11px; }
.p2 { margin-top: 28px; }
.col-mid { width: 285px; margin-left: 24px; display: flex; flex-direction: column; gap: 16px; }
.service { height: 284px; border-radius: 20px; }
.svc-title { font: 700 16.500px/22px "Open Sans", sans-serif; color: #252423; text-align: center; letter-spacing: -.3px; padding-left: 1px; }
.svc-body { display: flex; align-items: flex-start; margin-top: 12px; }
.svc-chart { width: 273px; font-size: 11.500px; }
.svc-rows { position: relative; height: 223px; padding-top: 4px; }
.svc-row { height: 19.300px; display: flex; align-items: center; }
.svc-lab { width: 52px; margin-right: 9px; text-align: right; color: #605e5c; white-space: nowrap; font-family: "Open Sans", sans-serif; letter-spacing: -.3px; }
.bar { height: 15px; background: #d94452; border: 1px solid #eb9aa3; border-left-color: #d94452; color: #fff; font-size: 12.500px; line-height: 13px; text-align: right; padding-right: 7px; position: relative; }
.grid { position: absolute; top: 0; bottom: 0; width: 0; border-left: 1px dotted #c8c6c4; }
.g0 { left: 61px; }
.g1 { left: 162px; }
.g2 { left: 263px; }
.svc-axis { display: flex; justify-content: space-between; width: 202px; margin-left: 61px; color: #605e5c; line-height: 20px; font-size: 12px; }
.svc-axis span { width: 0; display: flex; justify-content: center; }
.svc-scroll { width: 6px; height: 222px; background: #e8e8e8; border-radius: 2px; }
.svc-thumb { height: 64px; background: #a8a8a8; border-radius: 2px; }
.empty-mid { height: 152px; border-radius: 14px; }
.col-right { width: 337px; margin-left: 17px; display: flex; flex-direction: column; gap: 18px; }
.col-right-top { display: flex; gap: 18px; }
.empty-a { width: 219px; height: 195px; }
.empty-b { width: 100px; height: 195px; border-radius: 6px; }
.selected { height: 239px; border-radius: 16px; }

/* selection overlay */
.more-btn { position: absolute; left: 1164px; top: 363px; width: 35px; height: 34px; background: #fff; display: flex; align-items: center; justify-content: center; gap: 5px; }
.more-btn i { width: 3.500px; height: 3.500px; border-radius: 50%; background: #555; }
.sel-frame { position: absolute; left: 846px; top: 399px; width: 354px; height: 256px; border: 1px solid #c4c4c4; }
.h { position: absolute; display: block; border: 0 solid #a0a0a0; }
.c-tl { left: -2px; top: -2px; width: 15px; height: 15px; border-width: 5px 0 0 5px; }
.c-tr { right: -2px; top: -2px; width: 15px; height: 15px; border-width: 5px 5px 0 0; }
.c-bl { left: -2px; bottom: -2px; width: 15px; height: 15px; border-width: 0 0 5px 5px; }
.c-br { right: -2px; bottom: -2px; width: 15px; height: 15px; border-width: 0 5px 5px 0; }
.m-t { left: 167px; top: -2px; width: 18px; height: 6px; background: #a0a0a0; }
.m-b { left: 167px; bottom: -2px; width: 18px; height: 6px; background: #a0a0a0; }
.m-l { left: -2px; top: 118px; width: 6px; height: 18px; background: #a0a0a0; }
.m-r { right: -2px; top: 118px; width: 6px; height: 18px; background: #a0a0a0; }

/* panes */
.pane { background: #f3f2f1; display: flex; flex-direction: column; align-items: center; padding-top: 20px; }
.pane.filters { width: 50px; flex: none; background: #fff; border-left: 1px solid #b0aeac; padding-right: 3px; }
.format-pane { width: 51px; flex: none; border-left: 1px solid #e1dfdd; padding-right: 3px; }
.data-pane { width: 52px; flex: none; border-left: 1px solid #e1dfdd; padding-right: 4px; }
.dbl { width: 18px; height: 18px; flex: none; }
.funnel { width: 18px; height: 16px; margin-top: 25px; flex: none; }
.vtext { writing-mode: vertical-rl; font-size: 22px; font-weight: 600; color: #252423; line-height: 24px; letter-spacing: .2px; }
.format-pane .vtext, .data-pane .vtext { margin-top: 22px; }
.filters .vtext { margin-top: 14px; }

/* page tabs */
.pagebar { height: 53px; flex: none; background: #f3f2f1; display: flex; align-items: flex-start; }
.view-btn { width: 36px; margin-left: 15px; padding-top: 11px; display: flex; flex-direction: column; align-items: center; }
.desk-ico { width: 28px; height: 22px; }
.desk-line { width: 36px; height: 4px; border-radius: 2px; background: #117865; margin-top: 8px; }
.phone-ico { width: 18px; height: 30px; margin: 7px 0 0 39px; }
.arrow { width: 7px; height: 14px; margin-top: 19px; }
.a-l { margin-left: 33px; }
.a-r { margin-left: 25px; }
.page-tab { width: 114px; height: 53px; margin-left: 11px; background: #fff; border-left: 1px solid #c8c6c4; border-bottom: 6px solid #117865; display: flex; align-items: center; justify-content: center; font-size: 17px; font-weight: 600; padding-top: 5px; }
.add-tab { width: 59px; height: 53px; background: #117865; display: flex; align-items: center; justify-content: center; }
.add-tab svg { width: 16px; height: 16px; }

/* status bar */
.status { height: 35px; flex: none; background: #f3f2f1; border-top: 1px solid #dcdad8; display: flex; align-items: center; padding-left: 6px; color: #605e5c; font-size: 16.500px; }
.zoom { margin-left: auto; display: flex; align-items: center; padding-right: 28px; }
.z-minus { font-size: 17px; font-weight: 700; margin-right: 9px; }
.z-track { width: 149px; height: 1.500px; background: #605e5c; position: relative; }
.z-thumb { position: absolute; left: 41px; top: -8px; width: 6px; height: 17px; background: #605e5c; }
.z-tick { position: absolute; left: 74px; top: -3px; width: 1.500px; height: 7px; background: #605e5c; }
.z-plus { width: 12px; height: 12px; margin-left: 9px; }
.z-val { margin-left: 20px; color: #797775; }
.z-fit { width: 24px; height: 18px; margin-left: 28px; }
.divider { height: 2px; flex: none; background: linear-gradient(90deg, #111 0, #111 962px, #b5b0ae 962px); }

/* taskbar */
.taskbar { flex: 1; display: flex; align-items: center; background: linear-gradient(90deg, #e4dbd9, #e5dad8 40%, #e2d8d6 100%); }
.tk-weather { width: 36px; height: 24px; margin: 21px 0 0 30px; position: relative; align-self: flex-start; flex: none; }
.tk-weather svg { display: block; width: 36px; height: 24px; }
.tk-badge { position: absolute; width: 23px; height: 23px; border-radius: 50%; color: #fff; font: 400 14px/23px "Open Sans", sans-serif; text-align: center; }
.red { left: 18px; top: -12px; background: #c42b1c; }
.blue { left: 22px; top: -9px; background: #0a6ed1; }
.tk-start { width: 34px; height: 35px; margin-left: 273px; flex: none; }
.tk-search { width: 325px; height: 46px; margin-left: 22px; border-radius: 23px; background: #f7f3f0; border: 1px solid #d8d2cf; border-bottom: 2px solid #bdb8b5; display: flex; align-items: center; padding-left: 15px; font-size: 20px; color: #555; flex: none; }
.s-ico { width: 24px; height: 24px; }
.tk-search span { margin-left: 15px; }
.s-art { width: 66px; height: 40px; margin-left: auto; margin-right: 5px; }
.tk-taskview { width: 37px; height: 33px; margin-left: 20px; flex: none; }
.tk-teams { width: 38px; height: 33px; margin-left: 29px; flex: none; }
.teams-t { font: 700 13px "Open Sans", sans-serif; fill: #4b53bc; text-anchor: middle; }
.tk-folder { width: 36px; height: 34px; margin-left: 29px; flex: none; }
.tk-app { position: relative; flex: none; }
.tk-app svg { display: block; width: 100%; height: 100%; }
.dot { position: absolute; left: 50%; margin-left: -3px; width: 6px; height: 5px; border-radius: 50%; background: #6b6b6b; }
.edge { width: 36px; height: 36px; margin-left: 30px; }
.edge .dot { top: 41px; }
.tk-gmail { width: 34px; height: 25px; margin-left: 31px; flex: none; }
.tk-pbi { width: 57px; height: 58px; margin-left: 21px; flex: none; background: #f3eeec; border-radius: 5px; padding: 11px 0 0 10px; position: relative; }
.tk-pbi svg { display: block; width: 36px; height: 36px; }
.pbi-line { position: absolute; left: 16px; bottom: 1px; width: 23px; height: 4px; border-radius: 2px; background: #0a7bd4; }
.word { width: 37px; height: 32px; margin-left: 18px; }
.word .dot { top: 39px; }
.word-t { font: 700 13px "Open Sans", sans-serif; fill: #fff; text-anchor: middle; }
.whats { width: 37px; height: 36px; margin-left: 30px; }
.whats .dot { top: 41px; }
.excel { width: 36px; height: 33px; margin-left: 29px; }
.excel .dot { top: 40px; }
.excel-t { font: 700 14px "Open Sans", sans-serif; fill: #fff; text-anchor: middle; }
.tr-chev { width: 16px; height: 10px; margin-left: 118px; flex: none; }
.tr-cloud { width: 24px; height: 24px; margin-left: 27px; flex: none; }
.tr-lang { width: 50px; margin-left: 21px; display: flex; flex-direction: column; align-items: center; font-size: 17px; line-height: 24px; color: #252423; }
.tr-wifi { width: 25px; height: 22px; margin-left: 20px; flex: none; }
.tr-vol { width: 24px; height: 22px; margin-left: 11px; flex: none; }
.tr-batt { width: 24px; height: 20px; margin-left: 12px; flex: none; }
.tr-clock { width: 118px; display: flex; flex-direction: column; align-items: flex-end; font-size: 17.500px; line-height: 24px; color: #252423; }
.tr-bell { width: 20px; height: 24px; margin-left: 13px; flex: none; }
.tr-cop { width: 34px; height: 36px; margin-left: 27px; position: relative; flex: none; }
.tr-cop svg { display: block; width: 34px; height: 28px; }
.pre { position: absolute; left: 6px; bottom: 0; width: 26px; height: 13px; border-radius: 2px; background: #f5b800; color: #222; font: 700 10px/13px "Open Sans", sans-serif; text-align: center; }
```
